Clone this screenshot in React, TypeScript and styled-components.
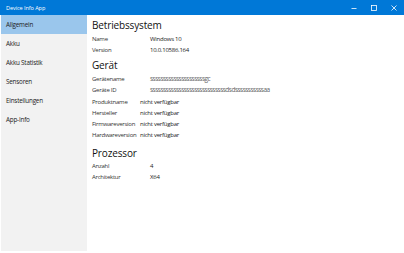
import React from "react";
import styled, { createGlobalStyle } from "styled-components";

const Global = createGlobalStyle`
  html, body { margin: 0; padding: 0; background: #ffffff; }
  body { font-family: "Open Sans", "Noto Sans", sans-serif; }
`;

const Window = styled.div`
  width: 404px;
  height: 253px;
  display: flex;
  flex-direction: column;
  background: #ffffff;
  box-sizing: border-box;
  overflow: hidden;
`;

const TitleBar = styled.div`
  height: 15px;
  flex: none;
  background: #0078d7;
  display: flex;
  align-items: center;
  color: #ffffff;
  padding-left: 6px;
`;

const TitleText = styled.span`
  font-size: 5.6px;
  flex: 1;
  letter-spacing: -0.1px;
`;

const Controls = styled.div`
  display: flex;
  height: 100%;
`;

const ControlButton = styled.div`
  width: 20px;
  height: 15px;
  display: flex;
  align-items: center;
  justify-content: center;
`;

const Body = styled.div`
  flex: 1;
  display: flex;
  padding: 0 1px 2px 1px;
  min-height: 0;
`;

const Sidebar = styled.nav`
  width: 86px;
  flex: none;
  background: #f2f2f2;
  display: flex;
  flex-direction: column;
`;

const NavItem = styled.div<{ $active?: boolean }>`
  height: 19px;
  display: flex;
  align-items: center;
  padding-left: 5px;
  font-size: 6.3px;
  color: #222222;
  letter-spacing: -0.2px;
  background: ${(p) => (p.$active ? "#9ac6ec" : "transparent")};
`;

const Content = styled.main`
  flex: 1;
  padding: 2px 0 0 5px;
  display: flex;
  flex-direction: column;
`;

const Section = styled.section<{ $gap?: number }>`
  display: flex;
  flex-direction: column;
  margin-top: ${(p) => p.$gap ?? 0}px;
`;

const Heading = styled.h2`
  margin: 0;
  font-weight: 400;
  font-size: 10px;
  line-height: 16px;
  color: #111111;
  letter-spacing: -0.15px;
`;

const Group = styled.div<{ $label: number; $gap?: number }>`
  display: grid;
  grid-template-columns: ${(p) => p.$label}px auto;
  grid-auto-rows: 11px;
  align-items: center;
  margin-top: ${(p) => p.$gap ?? 0}px;
`;

const Label = styled.span`
  font-size: 6px;
  color: #333333;
  letter-spacing: -0.25px;
  white-space: nowrap;
`;

const Value = styled.span`
  font-size: 6px;
  color: #1a1a1a;
  letter-spacing: -0.25px;
  white-space: nowrap;
`;

const Masked = styled.span`
  font-size: 6.5px;
  color: #666666;
  letter-spacing: -0.5px;
  white-space: nowrap;
`;

const Row = ({ label, value, masked }: { label: string; value: string; masked?: boolean }) => (
  <>
    <Label>{label}</Label>
    {masked ? <Masked>{value}</Masked> : <Value>{value}</Value>}
  </>
);

export default function App() {
  return (
    <>
      <Global />
      <Window>
        <TitleBar>
          <TitleText>Device Info App</TitleText>
          <Controls>
            <ControlButton>
              <svg width="6" height="6" viewBox="0 0 6 6">
                <line x1="0.5" y1="3.5" x2="5.5" y2="3.5" stroke="#fff" strokeWidth="0.8" />
              </svg>
            </ControlButton>
            <ControlButton>
              <svg width="6" height="6" viewBox="0 0 6 6">
                <rect x="0.5" y="0.5" width="5" height="5" fill="none" stroke="#fff" strokeWidth="0.8" />
              </svg>
            </ControlButton>
            <ControlButton>
              <svg width="6" height="6" viewBox="0 0 6 6">
                <path d="M0.5 0.5 L5.5 5.5 M5.5 0.5 L0.5 5.5" stroke="#fff" strokeWidth="0.8" />
              </svg>
            </ControlButton>
          </Controls>
        </TitleBar>
        <Body>
          <Sidebar>
            <NavItem $active>Allgemein</NavItem>
            <NavItem>Akku</NavItem>
            <NavItem>Akku Statistik</NavItem>
            <NavItem>Sensoren</NavItem>
            <NavItem>Einstellungen</NavItem>
            <NavItem>App-Info</NavItem>
          </Sidebar>
          <Content>
            <Section>
              <Heading>Betriebssystem</Heading>
              <Group $label={58}>
                <Row label="Name" value="Windows 10" />
                <Row label="Version" value="10.0.10586.164" />
              </Group>
            </Section>
            <Section $gap={2}>
              <Heading>Gerät</Heading>
              <Group $label={58}>
                <Row label="Gerätename" value="sssssssssssssssssssssgc" masked />
                <Row label="Geräte ID" value="sssssssssssssssssssssssssssssdsdsssssssssssaa" masked />
              </Group>
              <Group $label={48} $gap={1.5}>
                <Row label="Produktname" value="nicht verfügbar" />
                <Row label="Hersteller" value="nicht verfügbar" />
                <Row label="Firmwareversion" value="nicht verfügbar" />
                <Row label="Hardwareversion" value="nicht verfügbar" />
              </Group>
            </Section>
            <Section $gap={4}>
              <Heading>Prozessor</Heading>
              <Group $label={58}>
                <Row label="Anzahl" value="4" />
                <Row label="Architektur" value="X64" />
              </Group>
            </Section>
          </Content>
        </Body>
      </Window>
    </>
  );
}
